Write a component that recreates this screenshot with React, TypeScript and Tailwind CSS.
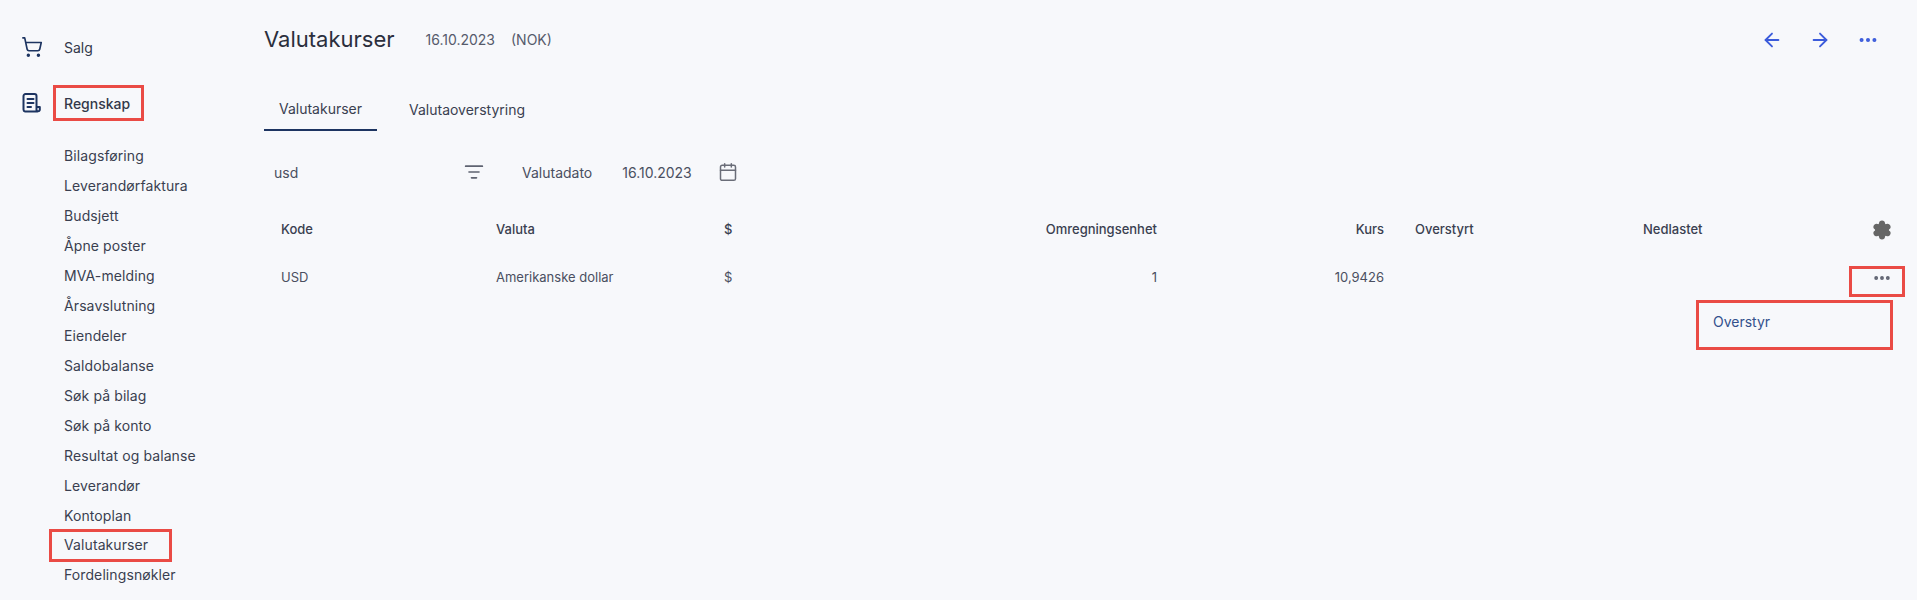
import { ArrowLeft, ArrowRight, Calendar, MoreHorizontal, ShoppingCart, ListFilter, Settings } from "lucide-react";

const items = ["Bilagsføring","Leverandørfaktura","Budsjett","Åpne poster","MVA-melding","Årsavslutning","Eiendeler","Saldobalanse","Søk på bilag","Søk på konto","Resultat og balanse","Leverandør","Kontoplan","Valutakurser","Fordelingsnøkler"];

const grid = "grid grid-cols-[13px_215px_228px_228px_209px_227px_31px_228px_230px_1fr] items-center";

function Box({ c }: { c: string }) {
  return <div className={"absolute border-[3px] border-[#ea4b45] " + c} />;
}

export default function App() {
  return (
    <div className="relative flex h-[600px] w-[1917px] overflow-hidden bg-[#f7f8fb] font-['Inter',sans-serif] text-[14px] text-[#3a3f50]">
      <aside className="flex w-[264px] shrink-0 flex-col pl-[21px] pt-[36px]">
        <div className="flex h-[22px] items-center">
          <ShoppingCart size={22} strokeWidth={1.8} className="text-[#1d3461]" />
          <span className="ml-[21px] text-[#33384a]">Salg</span>
        </div>
        <div className="mt-[34px] flex h-[22px] items-center">
          <svg width="22" height="22" viewBox="0 0 22 22" fill="none" stroke="#1d3461" strokeWidth="2" strokeLinecap="round" strokeLinejoin="round">
            <path d="M4 19.5 h12.5 M4 19.5 a2 2 0 0 1 -1.5-2 V4 a2 2 0 0 1 2-2 h9 a2 2 0 0 1 2 2 v14 a1.7 1.7 0 0 0 3.3 0 V15 H16" />
            <path d="M6.5 7h6M6.5 11h6M6.5 15h3.5" />
          </svg>
          <span className="ml-[21px] font-medium text-[#33384a]">Regnskap</span>
        </div>
        <nav className="mt-[27px] flex flex-col pl-[43px]">
          {items.map((t) => (
            <div key={t} className="flex h-[29.93px] items-center whitespace-nowrap tracking-[0.1px]">{t}</div>
          ))}
        </nav>
      </aside>

      <main className="flex min-w-0 flex-1 flex-col">
        <header className="flex h-[78px] items-center pr-[38px] pt-[1px]">
          <h1 className="text-[22px] text-[#2b2f3d]">Valutakurser</h1>
          <span className="ml-[31px] text-[#565b6b]">16.10.2023</span>
          <span className="ml-[16px] text-[#565b6b]">(NOK)</span>
          <div className="ml-auto flex items-center gap-[26px] text-[#3b5bdb]">
            <ArrowLeft size={22} strokeWidth={2} />
            <ArrowRight size={22} strokeWidth={2} />
            <MoreHorizontal size={22} strokeWidth={2.4} />
          </div>
        </header>

        <div className="mt-[9px] flex">
          <div className="flex h-[44px] w-[113px] items-center justify-center border-b-2 border-[#1d3461] text-[#3a3f50]">Valutakurser</div>
          <div className="ml-[17px] flex h-[44px] items-center px-[15px] whitespace-nowrap">Valutaoverstyring</div>
        </div>

        <div className="mt-[29px] flex h-[24px] items-center">
          <span className="ml-[10px] w-[190px] text-[#4a4f60]">usd</span>
          <ListFilter size={20} strokeWidth={2} className="text-[#5f6371]" />
          <span className="ml-[38px] text-[#4a4f60]">Valutadato</span>
          <span className="ml-[30px] text-[#4a4f60]">16.10.2023</span>
          <Calendar size={20} strokeWidth={1.8} className="ml-[26px] text-[#6a6d78]" />
        </div>

        <div className={grid + " mt-[22px] h-[48px] font-medium text-[13px] text-[#3a3f50]"}>
          <span />
          <span className="pl-[4px]">Kode</span>
          <span className="pl-[4px]">Valuta</span>
          <span className="pl-[4px]">$</span>
          <span className="text-right">Omregningsenhet</span>
          <span className="text-right">Kurs</span>
          <span />
          <span>Overstyrt</span>
          <span>Nedlastet</span>
          <Settings size={20} strokeWidth={2.6} className="-ml-[1px] text-[#666]" fill="#666" />
        </div>
        <div className={grid + " h-[48px] text-[13px] text-[#4a4f60]"}>
          <span />
          <span className="pl-[4px]">USD</span>
          <span className="pl-[4px]">Amerikanske dollar</span>
          <span className="pl-[4px]">$</span>
          <span className="text-right">1</span>
          <span className="text-right">10,9426</span>
          <span /><span /><span />
          <MoreHorizontal size={20} strokeWidth={2.6} className="-ml-[1px] text-[#5f6371]" />
        </div>
        <div className="ml-[1444px] mt-[3px] pl-[0px] text-[14px] text-[#3b4a7a]">
          <span className="ml-[-329px] block w-[160px] pl-[0px]" />
        </div>
      </main>

      <div className="absolute left-[1713px] top-[311px] text-[14px] text-[#33508c]">Overstyr</div>
      <Box c="left-[53px] top-[85px] h-[36px] w-[91px]" />
      <Box c="left-[49px] top-[529px] h-[33px] w-[123px]" />
      <Box c="left-[1849px] top-[266px] h-[31px] w-[56px]" />
      <Box c="left-[1696px] top-[300px] h-[50px] w-[197px]" />
    </div>
  );
}
